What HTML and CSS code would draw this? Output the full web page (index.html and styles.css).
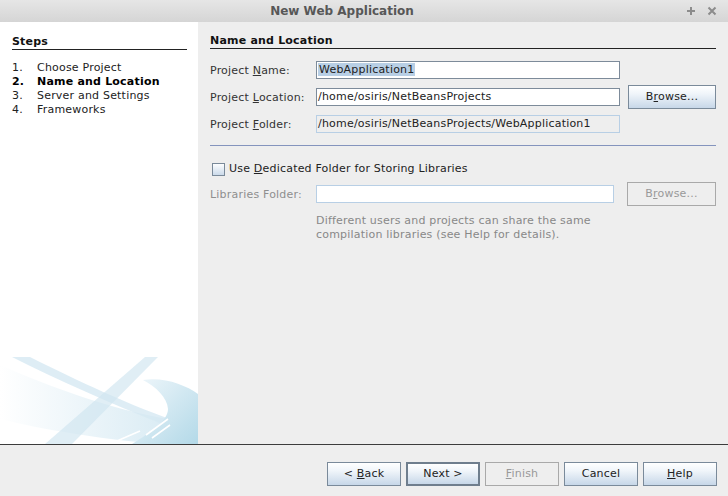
FILE: index.html
```html
<!DOCTYPE html>
<html>
<head>
<meta charset="utf-8">
<title>New Web Application</title>
<link rel="stylesheet" href="styles.css">
</head>
<body>
<div class="window">
  <div class="titlebar">
    <div class="title">New Web Application</div>
    <div class="controls">
      <svg class="ctl" width="10" height="10" viewBox="0 0 10 10"><path d="M5 1v8M1 5h8" stroke="#8c8c8c" stroke-width="2"/></svg>
      <svg class="ctl" width="10" height="10" viewBox="0 0 10 10"><path d="M1.5 1.5l7 7M8.5 1.5l-7 7" stroke="#8c8c8c" stroke-width="2"/></svg>
    </div>
  </div>
  <div class="main">
    <div class="steps">
      <div class="heading">Steps</div>
      <ol class="steplist">
        <li><span class="num">1.</span><span>Choose Project</span></li>
        <li class="current"><span class="num">2.</span><span>Name and Location</span></li>
        <li><span class="num">3.</span><span>Server and Settings</span></li>
        <li><span class="num">4.</span><span>Frameworks</span></li>
      </ol>
      <svg class="wave" width="198" height="87" viewBox="0 0 198 87">
        <defs>
          <linearGradient id="gB" x1="0" y1="0" x2="1" y2="0">
            <stop offset="0" stop-color="#ffffff"/>
            <stop offset="1" stop-color="#d3e8f2"/>
          </linearGradient>
          <linearGradient id="gD" x1="0" y1="0" x2="1" y2="1">
            <stop offset="0" stop-color="#f0f7fb"/>
            <stop offset="1" stop-color="#b3d9e8"/>
          </linearGradient>
        </defs>
        <path d="M0,8 C50,30 110,52 168,62 L150,86 C100,82 40,72 0,62 Z" fill="url(#gB)" opacity="0.85"/>
        <path d="M12,0 L30,0 C80,25 130,48 170,62 L160,66 C110,46 60,24 12,0 Z" fill="#d6e9f2" opacity="0.8"/>
        <path d="M145,0 L158,0 L72,87 L45,87 Z" fill="#cfe5f0" opacity="0.65"/>
        <path d="M143,23 C165,20 185,28 198,37 L198,87 L132,87 C150,76 168,64 168,52 C167,40 156,30 143,23 Z" fill="url(#gD)"/>
        <path d="M146,78 L168,62 M152,81 L170,68 M110,87 L140,74" stroke="#ffffff" stroke-width="1.6" fill="none"/>
      </svg>
    </div>
    <div class="panel">
      <div class="heading">Name and Location</div>
      <div class="form">
        <label class="lbl">Project <u>N</u>ame:</label>
        <div class="field"><span class="sel">WebApplication1</span></div>
        <div></div>

        <label class="lbl">Project <u>L</u>ocation:</label>
        <div class="field">/home/osiris/NetBeansProjects</div>
        <div class="btn">B<u>r</u>owse...</div>

        <label class="lbl">Project <u>F</u>older:</label>
        <div class="field readonly">/home/osiris/NetBeansProjects/WebApplication1</div>
        <div></div>
      </div>
      <div class="sep"></div>
      <div class="check-row">
        <span class="checkbox"></span>
        <span>Use <u>D</u>edicated Folder for Storing Libraries</span>
      </div>
      <div class="form libs">
        <label class="lbl disabled">Libraries Folder:</label>
        <div class="field inactive"></div>
        <div class="btn disabled">B<u>r</u>owse...</div>
      </div>
      <div class="help">Different users and projects can share the same<br>compilation libraries (see Help for details).</div>
    </div>
  </div>
  <div class="footer">
    <div class="btn">&lt; <u>B</u>ack</div>
    <div class="btn default">Next &gt;</div>
    <div class="btn disabled"><u>F</u>inish</div>
    <div class="btn">Cancel</div>
    <div class="btn"><u>H</u>elp</div>
  </div>
</div>
</body>
</html>
```

FILE: styles.css
```css
* { box-sizing: border-box; }
html, body { margin: 0; padding: 0; }
body {
  width: 728px;
  height: 496px;
  overflow: hidden;
  background: #eeeeee;
  font-family: "DejaVu Sans", "Liberation Sans", sans-serif;
  font-size: 11px;
  letter-spacing: 0.2px;
  color: #222222;
}
.window { width: 728px; height: 496px; display: flex; flex-direction: column; }

.titlebar {
  height: 22px;
  display: flex;
  align-items: center;
  background: linear-gradient(#e6e6e6, #d5d5d5);
}
.title {
  flex: 1;
  text-align: center;
  font-weight: bold;
  font-size: 12px;
  letter-spacing: 0;
  color: #575757;
}
.controls {
  width: 44px;
  display: flex;
  align-items: center;
  gap: 11px;
  padding-left: 2px;
}
.ctl { display: block; }

.main { height: 422px; display: flex; }
.steps {
  width: 198px;
  flex-shrink: 0;
  background: #ffffff;
  padding: 12px 11px 0 12px;
  display: flex;
  flex-direction: column;
}
.heading {
  line-height: 15px;
  font-weight: bold;
  border-bottom: 1px solid #222;
  color: #111;
}
.steplist { list-style: none; margin: 11px 0 0 0; padding: 0; }
.steplist li { line-height: 14px; display: flex; color: #222; }
.steplist .num { width: 25px; }
.steplist li.current { font-weight: bold; color: #000; }
.wave { display: block; margin: auto -11px 0 -12px; }

.panel { flex: 1; min-width: 0; padding: 11px 12px 0 12px; }
.form {
  margin-top: 9px;
  display: grid;
  grid-template-columns: 98px 304px 88px;
  column-gap: 8px;
  grid-auto-rows: 24px;
  row-gap: 3px;
  align-items: center;
}
.lbl { color: #333; white-space: nowrap; }
.lbl.disabled { color: #8e8e8e; }
.field {
  height: 18px;
  line-height: 16px;
  border: 1px solid #7d8b9a;
  background: #ffffff;
  padding-left: 1px;
  white-space: nowrap;
  overflow: hidden;
  color: #222;
}
.field.readonly { background: #eeeeee; border-color: #b8cfe5; }
.field.inactive { background: #ffffff; border-color: #b8cfe5; }
.sel { background: #b8cfe5; padding: 0 1px; }

.btn {
  height: 24px;
  line-height: 22px;
  text-align: center;
  border: 1px solid #7a8a9a;
  background: linear-gradient(#ffffff 0%, #f0f5fa 35%, #c7d7e8 100%);
  color: #222;
  white-space: nowrap;
}
.btn.default { border: 2px solid #6f7e8d; line-height: 20px; }
.btn.disabled { border-color: #a9a9a9; background: #eeeeee; color: #999999; }

.sep { margin-top: 9px; height: 1px; background: #8494bd; }
.check-row {
  margin-top: 16px;
  display: flex;
  align-items: center;
  line-height: 14px;
  gap: 4px;
  color: #222;
}
.checkbox {
  width: 13px;
  height: 13px;
  margin-left: 2px;
  border: 1px solid #7a8a9a;
  background: linear-gradient(#fdfeff, #cbdaea);
}
.form.libs {
  margin-top: 6px;
  grid-template-columns: 106px 298px 1fr;
  column-gap: 0;
}
.form.libs .btn { width: 89px; justify-self: end; }
.help {
  margin-top: 8px;
  padding-left: 106px;
  line-height: 14px;
  color: #888888;
}

.footer {
  flex: 1;
  border-top: 1px solid #3c3c3c;
  padding: 17px 11px 0 0;
  display: flex;
  justify-content: flex-end;
  align-items: flex-start;
  gap: 5px;
}
.footer .btn { width: 74px; }
```
